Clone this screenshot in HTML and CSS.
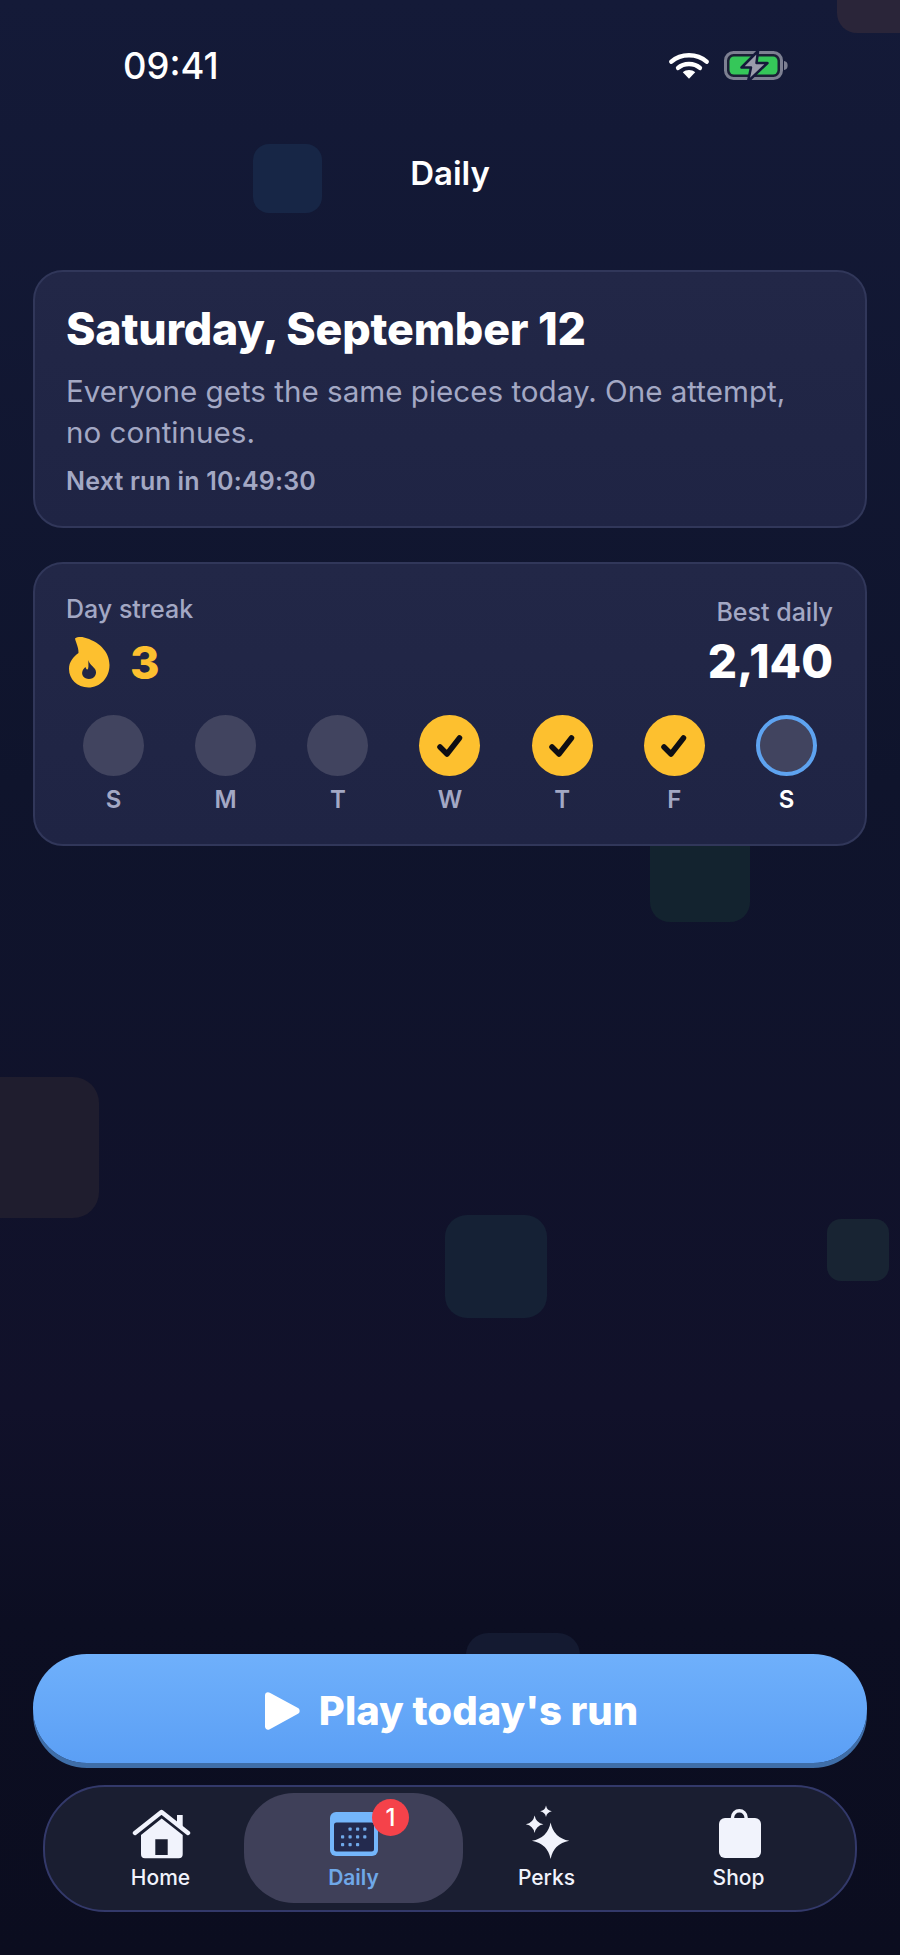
FILE: index.html
```html
<!DOCTYPE html>
<html lang="en">
<head>
    <meta charset="UTF-8">
    <meta name="viewport" content="width=device-width, initial-scale=1.0">
    <title>Daily</title>
    <link rel="stylesheet" href="styles.css">
</head>
<body>
<div class="screen">
    <!-- background tiles -->
    <div class="tile tile-plum-top"></div>
    <div class="tile tile-blue-top"></div>
    <div class="tile tile-green-mid"></div>
    <div class="tile tile-plum-left"></div>
    <div class="tile tile-teal-mid"></div>
    <div class="tile tile-green-right"></div>
    <div class="tile tile-navy-low"></div>

    <div class="status-bar">
        <span class="time">09:41</span>
        <div class="status-icons">
            <svg class="wifi" width="40" height="30" viewBox="0 0 42 30">
                <path d="M2.5 10.5C12.5 1.5 29.5 1.5 39.5 10.5" fill="none" stroke="#fff" stroke-width="4.6" stroke-linecap="round"/>
                <path d="M9.5 17C15.5 11.5 26.5 11.5 32.5 17" fill="none" stroke="#fff" stroke-width="4.6" stroke-linecap="round"/>
                <path d="M14.5 21.5C18 18.6 24 18.6 27.5 21.5L21 28.5Z" fill="#fff"/>
            </svg>
            <svg class="battery" width="64" height="34" viewBox="0 0 64 34">
                <rect x="1.5" y="3.5" width="56" height="26" rx="8" fill="#1b2036" stroke="#7d8092" stroke-width="3"/>
                <rect x="5.5" y="7.5" width="48" height="18" rx="4.5" fill="#35c759"/>
                <path d="M60 12c3 .5 3.6 2.5 3.6 4.5S63 20.5 60 21Z" fill="#7d8092"/>
                <path d="M34 2 17.500 18.500h9.500L24 32.500 43.500 14H32.500Z" fill="#9a9cab" stroke="#15193a" stroke-width="2.500" stroke-linejoin="round"/>
            </svg>
        </div>
    </div>

    <div class="page-title">Daily</div>

    <main class="content">
        <section class="card card-today">
            <h1>Saturday, September 12</h1>
            <p class="blurb">Everyone gets the same pieces today. One attempt, no continues.</p>
            <div class="next-run">Next run in 10:49:30</div>
        </section>

        <section class="card card-streak">
            <div class="streak-top">
                <div class="streak-left">
                    <div class="stat-label">Day streak</div>
                    <div class="streak-count">
                        <svg class="flame" width="42" height="54" viewBox="0 0 42 54">
                            <path fill="#fdc02f" fill-rule="evenodd" d="M7 2.500C9 1 13 .8 16 1.500 30 5 41.500 15 41.500 29 41.500 42 32 51.500 20.500 51.500 9 51.500 1 43 1 33 1 26 5 21 10.500 17 10.500 11 8 7 7 2.500ZM20.500 24C21 28 24 29 27 33 30 38 26 43 21 43 16 43 13 39 14.500 35 15 33 16.500 32 17.500 31 18 33 19 34 20 33 21 30 20 27 20.500 24Z"/>
                        </svg>
                        <span>3</span>
                    </div>
                </div>
                <div class="streak-right">
                    <div class="stat-label">Best daily</div>
                    <div class="best-score">2,140</div>
                </div>
            </div>

            <div class="week">
                <div class="day"><div class="dot"></div><span>S</span></div>
                <div class="day"><div class="dot"></div><span>M</span></div>
                <div class="day"><div class="dot"></div><span>T</span></div>
                <div class="day"><div class="dot done"><svg width="30" height="30" viewBox="-15 -15 30 30"><path d="M-10 1-3 8 9.500-8" class="tick"/></svg></div><span>W</span></div>
                <div class="day"><div class="dot done"><svg width="30" height="30" viewBox="-15 -15 30 30"><path d="M-10 1-3 8 9.500-8" class="tick"/></svg></div><span>T</span></div>
                <div class="day"><div class="dot done"><svg width="30" height="30" viewBox="-15 -15 30 30"><path d="M-10 1-3 8 9.500-8" class="tick"/></svg></div><span>F</span></div>
                <div class="day today"><div class="dot"></div><span>S</span></div>
            </div>
        </section>
    </main>

    <div class="bottom">
        <button class="play-btn">
            <svg width="36" height="40" viewBox="0 0 36 40">
                <path d="M1 4.500C1 1.800 3.500.5 5.800 1.800L34 17c2.200 1.300 2.200 4.500 0 5.800L5.800 38.200C3.500 39.500 1 38.200 1 35.500Z" fill="#fff"/>
            </svg>
            <span>Play today's run</span>
        </button>

        <nav class="tabbar">
            <a class="tab">
                <svg width="60" height="56" viewBox="0 -4 60 56">
                    <path d="M4 25 30.500 4 57 25" fill="none" stroke="#f1f3fc" stroke-width="4.400" stroke-linecap="round" stroke-linejoin="round"/>
                    <rect x="46" y="7" width="5.700" height="12" fill="#f1f3fc"/>
                    <path fill="#f1f3fc" d="M30.700 10.500 51.700 27V46.300a4 4 0 0 1-4 4H14a4 4 0 0 1-4-4V27ZM24.300 31.300V47H36.700V31.300Z" fill-rule="evenodd"/>
                </svg>
                <span>Home</span>
            </a>
            <a class="tab active">
                <svg width="48" height="56" viewBox="0 -8 48 56">
                    <rect x="0" y="0" width="48" height="44" rx="6" fill="#74b6fb"/>
                    <rect x="4" y="10.500" width="40" height="29" rx="2.500" fill="#232a4e"/>
                    <g fill="#6fa8e8">
                        <rect x="18.500" y="15.500" width="3.200" height="3.200" rx=".8"/><rect x="26" y="15.500" width="3.200" height="3.200" rx=".8"/><rect x="33.200" y="15.500" width="3.200" height="3.200" rx=".8"/>
                        <rect x="11" y="23.300" width="3.200" height="3.200" rx=".8"/><rect x="18.500" y="23.300" width="3.200" height="3.200" rx=".8"/><rect x="26" y="23.300" width="3.200" height="3.200" rx=".8"/><rect x="33.200" y="23.300" width="3.200" height="3.200" rx=".8"/>
                        <rect x="11" y="31" width="3.200" height="3.200" rx=".8"/><rect x="18.500" y="31" width="3.200" height="3.200" rx=".8"/><rect x="26" y="31" width="3.200" height="3.200" rx=".8"/>
                    </g>
                </svg>
                <span>Daily</span>
                <div class="badge">1</div>
            </a>
            <a class="tab">
                <svg width="52" height="56" viewBox="-3.300 -1 52 56">
                    <g fill="#f1f3fc">
                        <path d="M26.300 17.400Q29.200 32.800 45 35.700 29.200 38.600 26.300 54 23.400 38.600 7.600 35.700 23.400 32.800 26.300 17.400Z"/>
                        <path d="M10.300 10.500Q11.700 17.900 19.100 19.300 11.700 20.700 10.300 28.100 8.900 20.700 1.500 19.300 8.900 17.900 10.300 10.500Z"/>
                        <path d="M21.700.500Q22.600 5.400 27.500 6.300 22.600 7.200 21.700 12.100 20.800 7.200 15.900 6.300 20.800 5.400 21.700.500Z"/>
                    </g>
                </svg>
                <span>Perks</span>
            </a>
            <a class="tab tab-shop">
                <svg width="46" height="56" viewBox="-1 -4 46 56">
                    <path d="M15.500 14v-4.500a6.800 6.800 0 0 1 13.600 0V14" fill="none" stroke="#f1f3fc" stroke-width="3.400"/>
                    <rect x="2" y="10" width="42" height="40" rx="6" fill="#f1f3fc"/>
                </svg>
                <span>Shop</span>
            </a>
        </nav>
    </div>
</div>
</body>
</html>
```

FILE: styles.css
```css
* {
    box-sizing: border-box;
}

body {
    margin: 0;
    font-family: 'Inter', 'Liberation Sans', sans-serif;
    background-color: #0b0d1f;
}

.screen {
    position: relative;
    display: flex;
    flex-direction: column;
    width: 900px;
    height: 1955px;
    overflow: hidden;
    background: linear-gradient(180deg, #141a38 0%, #0f142c 40%, #11112a 72%, #0c0e22 83%, #0b0d1f 100%);
}

/* faint rounded squares floating behind the content */
.tile {
    position: absolute;
    border-radius: 16px;
}

.tile-plum-top { left: 837px; top: -60px; width: 100px; height: 93px; background-color: #2a2539; border-radius: 20px; }
.tile-blue-top { left: 253px; top: 144px; width: 69px; height: 69px; background-color: #172646; }
.tile-green-mid { left: 650px; top: 800px; width: 100px; height: 122px; background-color: #13232f; border-radius: 20px; }
.tile-plum-left { left: -40px; top: 1077px; width: 139px; height: 141px; background-color: #1f1d2e; border-radius: 26px; }
.tile-teal-mid { left: 445px; top: 1215px; width: 102px; height: 103px; background-color: #152135; border-radius: 22px; }
.tile-green-right { left: 827px; top: 1219px; width: 62px; height: 62px; background-color: #182433; border-radius: 14px; }
.tile-navy-low { left: 466px; top: 1633px; width: 114px; height: 60px; background-color: #141a31; border-radius: 22px; }

.status-bar {
    position: relative;
    display: flex;
    justify-content: space-between;
    align-items: center;
    height: 132px;
    padding: 0 112px 0 123px;
}

.time {
    color: #fff;
    font-size: 36.400px;
    font-weight: 500;
}

.status-icons {
    display: flex;
    align-items: center;
    gap: 15px;
}

.page-title {
    position: relative;
    height: 82px;
    margin-bottom: 56px;
    color: #fff;
    font-size: 33px;
    font-weight: 600;
    line-height: 82px;
    text-align: center;
}

.content {
    position: relative;
    display: flex;
    flex-direction: column;
    gap: 34px;
    padding: 0 33px;
}

.card {
    padding: 30px 32px 32px 31px;
    border: 2px solid #31375a;
    border-radius: 30px;
    background: linear-gradient(180deg, #222747 0%, #1f2444 100%);
}

.card-today {
    height: 258px;
}

h1 {
    margin: 0 0 15px;
    color: #fff;
    font-size: 44.700px;
    font-weight: 800;
    line-height: 54px;
    letter-spacing: -0.2px;
}

.blurb {
    margin: 0 0 13px;
    padding-right: 40px;
    color: #a3a8c4;
    font-size: 29.600px;
    line-height: 41px;
}

.next-run {
    color: #a3a8c4;
    font-size: 25px;
    font-weight: 600;
    line-height: 30px;
    letter-spacing: 0.2px;
}

.card-streak {
    height: 284px;
    padding-top: 30px;
}

.streak-top {
    display: flex;
    justify-content: space-between;
    height: 121px;
}

.stat-label {
    color: #a3a8c4;
    font-size: 25px;
    font-weight: 500;
    line-height: 30px;
}

.streak-count {
    display: flex;
    align-items: center;
    gap: 20px;
    margin-top: 11px;
    padding-left: 2px;
    color: #fdc02f;
    font-size: 45px;
    font-weight: 800;
}

.streak-right {
    padding-top: 3px;
    text-align: right;
}

.best-score {
    margin-top: 7px;
    color: #fff;
    font-size: 46px;
    font-weight: 800;
    line-height: 54px;
}

.week {
    display: flex;
    justify-content: space-between;
    padding: 0 16px 0 17px;
}

.day {
    display: flex;
    flex-direction: column;
    align-items: center;
    gap: 9px;
    width: 61px;
    color: #a3a8c4;
    font-size: 24px;
    font-weight: 600;
    line-height: 30px;
}

.dot {
    display: flex;
    justify-content: center;
    align-items: center;
    width: 61px;
    height: 61px;
    border-radius: 50%;
    background-color: #41445f;
}

.dot.done {
    background-color: #fdc02f;
}

.tick {
    fill: none;
    stroke: #0e0e14;
    stroke-width: 5.500;
    stroke-linecap: round;
    stroke-linejoin: round;
}

.today {
    color: #fff;
}

.today .dot {
    border: 4px solid #5ea3f0;
}

.bottom {
    position: relative;
    margin-top: auto;
    padding: 0 33px 43px;
}

.play-btn {
    display: flex;
    justify-content: center;
    align-items: center;
    gap: 19px;
    width: 100%;
    height: 109px;
    margin-bottom: 22px;
    padding: 4px 0 0 2px;
    border: none;
    border-radius: 54px;
    background: linear-gradient(180deg, #6fb0fb 0%, #5b9ff5 100%);
    box-shadow: 0 5px 0 #3f6ea8;
    color: #fff;
    font-family: inherit;
    font-size: 40px;
    font-weight: 800;
}

.tabbar {
    display: grid;
    grid-template-columns: repeat(4, 193px);
    justify-content: center;
    height: 127px;
    margin: 0 10px;
    border: 2px solid #33396a;
    border-radius: 62px;
    background-color: #1a1e31;
}

.tab {
    position: relative;
    display: flex;
    flex-direction: column;
    align-items: center;
    gap: 5px;
    padding-top: 17px;
    color: #f1f3fc;
    font-size: 21px;
    font-weight: 500;
    line-height: 26px;
}

.tab-shop {
    left: -1px;
}

.tab svg, .tab span {
    position: relative;
}

.tab.active {
    color: #6fa8e8;
    font-weight: 600;
}

/* selection pill is wider than the tab column */
.tab.active::before {
    content: "";
    position: absolute;
    top: 6px;
    bottom: 7px;
    left: -13px;
    right: -13px;
    border-radius: 50px;
    background-color: #3f4059;
}

.badge {
    position: absolute;
    left: 115px;
    top: 12px;
    width: 37px;
    height: 37px;
    border-radius: 50%;
    background-color: #f5424a;
    color: #fff;
    font-size: 24px;
    font-weight: 500;
    line-height: 37px;
    text-align: center;
}
```
